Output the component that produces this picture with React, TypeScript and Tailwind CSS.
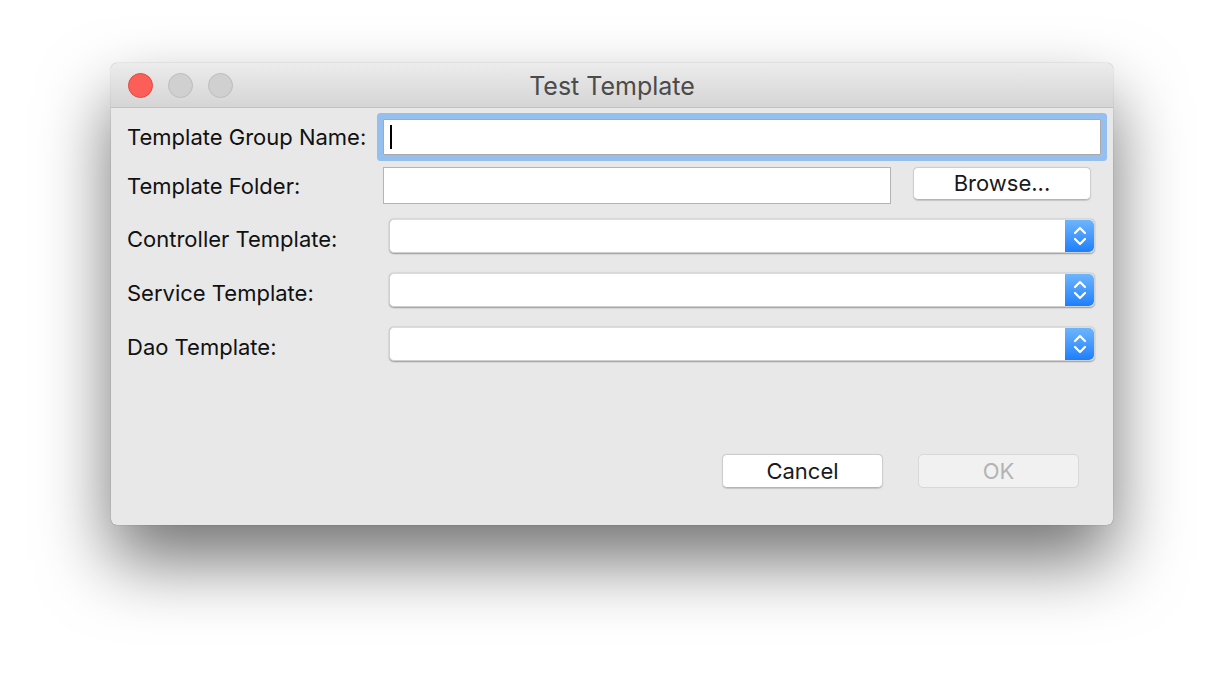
import React from "react";

const font = { fontFamily: "Inter, 'Liberation Sans', sans-serif" };

function Stepper() {
  return (
    <div className="w-[29px] h-full rounded-r-[5px] bg-gradient-to-b from-[#6db4fb] to-[#1a7ffb] flex items-center justify-center">
      <svg width="16" height="24" viewBox="0 0 16 24" fill="none" stroke="white" strokeWidth="2.2" strokeLinecap="round" strokeLinejoin="round">
        <path d="M3 9 L8 4 L13 9" />
        <path d="M3 15 L8 20 L13 15" />
      </svg>
    </div>
  );
}

function SelectRow({ label, mt }: { label: string; mt: string }) {
  return (
    <div className={`flex items-center ${mt}`}>
      <div className="w-[262px] pt-[6px] leading-[24px] text-[22px] text-[#111]">{label}</div>
      <div className="w-[706px] h-[34px] flex rounded-[5px] bg-white shadow-[0_0.5px_1.5px_rgba(0,0,0,0.35)] border border-[#d0d0d0] border-t-[#dcdcdc]">
        <div className="flex-1" />
        <Stepper />
      </div>
    </div>
  );
}

export default function App() {
  return (
    <div className="w-[1224px] h-[684px] bg-white pt-[63px] pl-[111px]" style={font}>
      <div className="w-[1002px] rounded-[6px] bg-[#e8e8e8] shadow-[0_36px_70px_rgba(0,0,0,0.55),0_0_1px_rgba(0,0,0,0.5)] overflow-hidden">
        {/* Title bar */}
        <div className="h-[45px] flex items-center bg-gradient-to-b from-[#ececec] to-[#d5d5d5] border-b border-[#c2c2c2] relative">
          <div className="flex items-center gap-[15px] pl-[17px]">
            <div className="w-[25px] h-[25px] rounded-full bg-[#fc5f57] border border-[#df4a42]" />
            <div className="w-[25px] h-[25px] rounded-full bg-[#d0d0d0] border border-[#bdbdbd]" />
            <div className="w-[25px] h-[25px] rounded-full bg-[#d0d0d0] border border-[#bdbdbd]" />
          </div>
          <div className="absolute inset-0 pt-[3px] flex items-center justify-center text-[25px] text-[#4b4b4b] pointer-events-none">
            Test Template
          </div>
        </div>
        {/* Body */}
        <div className="pl-[16px] pt-[11px] pb-[37px]">
          <div className="flex items-center">
            <div className="w-[256px] text-[22px] text-[#111]">Template Group Name:</div>
            <div className="w-[718px] h-[36px] bg-white border border-[#a9a9a9] rounded-[1px] shadow-[0_0_0_6px_#94bfef] flex items-center pl-[6px]">
              <div className="w-[2px] h-[24px] bg-black" />
            </div>
          </div>
          <div className="flex items-start mt-[12px]">
            <div className="w-[256px] h-[37px] pt-[2px] flex items-center text-[22px] text-[#111]">Template Folder:</div>
            <div className="w-[508px] h-[37px] bg-white border border-[#b4b4b4]" />
            <div className="ml-[22px] w-[178px] h-[33px] rounded-[5px] bg-white border border-[#cdcdcd] border-b-[#b5b5b5] shadow-[0_0.5px_1px_rgba(0,0,0,0.15)] flex items-center justify-center text-[22px] text-[#1a1a1a]">
              Browse...
            </div>
          </div>
          <SelectRow label="Controller Template:" mt="mt-[15px]" />
          <SelectRow label="Service Template:" mt="mt-[20px]" />
          <SelectRow label="Dao Template:" mt="mt-[20px]" />
          <div className="flex mt-[93px] pl-[595px] gap-[35px]">
            <div className="w-[161px] h-[34px] rounded-[5px] bg-white border border-[#cdcdcd] border-b-[#b5b5b5] shadow-[0_0.5px_1px_rgba(0,0,0,0.15)] flex items-center justify-center text-[22px] text-[#1a1a1a]">
              Cancel
            </div>
            <div className="w-[161px] h-[34px] rounded-[5px] bg-[#f1f1f1] border border-[#d8d8d8] flex items-center justify-center text-[22px] text-[#b3b3b3]">
              OK
            </div>
          </div>
        </div>
      </div>
    </div>
  );
}
